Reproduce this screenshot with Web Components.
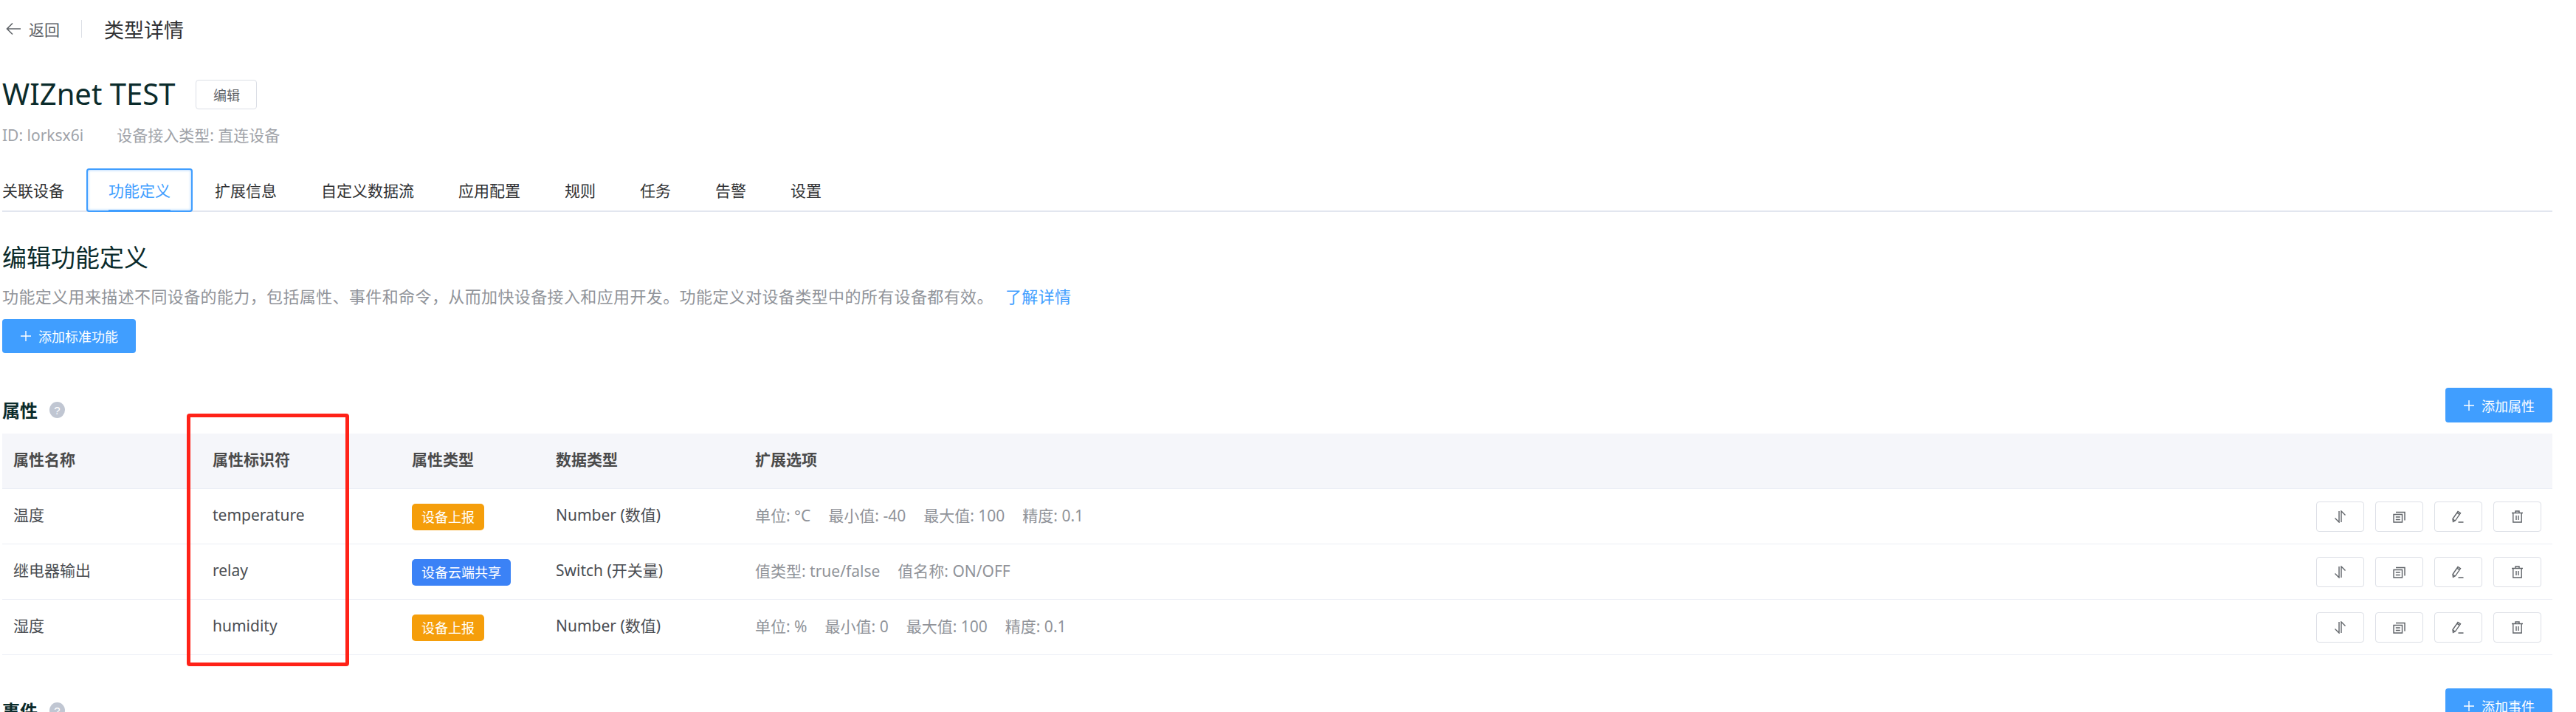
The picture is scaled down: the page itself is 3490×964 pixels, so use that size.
<!DOCTYPE html>
<html lang="zh-CN"><head><meta charset="utf-8"><title>类型详情</title>
<style>
html,body{margin:0;padding:0;height:964px;overflow:hidden;background:#fff;font-family:"Noto Sans","Noto Sans CJK SC",sans-serif;color:#303133}
</style></head><body>
<x-page>
  <x-topbar><span slot="back">返回</span>类型详情</x-topbar>
  <x-titlerow><span slot="title">WIZnet TEST</span><x-btn kind="small">编辑</x-btn></x-titlerow>
  <x-meta><span>ID: lorksx6i</span><span>设备接入类型: 直连设备</span></x-meta>
  <x-tabs>
    <x-tab>关联设备</x-tab><x-tab active>功能定义</x-tab><x-tab>扩展信息</x-tab><x-tab>自定义数据流</x-tab><x-tab>应用配置</x-tab><x-tab>规则</x-tab><x-tab>任务</x-tab><x-tab>告警</x-tab><x-tab>设置</x-tab>
  </x-tabs>
  <x-intro>
    <span slot="head">编辑功能定义</span>
    功能定义用来描述不同设备的能力&#xFF0C;包括属性、事件和命令&#xFF0C;从而加快设备接入和应用开发。功能定义对设备类型中的所有设备都有效。<span slot="link">了解详情</span>
    <x-btn slot="action" kind="primary" style="height:46px">添加标准功能</x-btn>
  </x-intro>
  <x-section-head style="margin-top:47px"><span>属性</span><x-btn slot="action" kind="primary">添加属性</x-btn></x-section-head>
  <x-table>
    <x-row head><span>属性名称</span><span>属性标识符</span><span>属性类型</span><span>数据类型</span><span>扩展选项</span></x-row>
    <x-row><span>温度</span><span>temperature</span><span><x-badge>设备上报</x-badge></span><span>Number (数值)</span><x-ext><span>单位: °C</span><span>最小值: -40</span><span>最大值: 100</span><span>精度: 0.1</span></x-ext><x-actions></x-actions></x-row>
    <x-row><span>继电器输出</span><span>relay</span><span><x-badge kind="blue">设备云端共享</x-badge></span><span>Switch (开关量)</span><x-ext><span>值类型: true/false</span><span>值名称: ON/OFF</span></x-ext><x-actions></x-actions></x-row>
    <x-row><span>湿度</span><span>humidity</span><span><x-badge>设备上报</x-badge></span><span>Number (数值)</span><x-ext><span>单位: %</span><span>最小值: 0</span><span>最大值: 100</span><span>精度: 0.1</span></x-ext><x-actions></x-actions></x-row>
  </x-table>
  <x-section-head style="margin-top:45px"><span>事件</span><x-btn slot="action" kind="primary">添加事件</x-btn></x-section-head>
  <x-highlight></x-highlight>
</x-page>
<script>
function def(name, html, init){
  customElements.define(name, class extends HTMLElement{
    constructor(){super();this.attachShadow({mode:'open'}).innerHTML=html;}
    connectedCallback(){ if(init) init.call(this); }
  });
}
def('x-page',`<style>:host{display:block;position:relative;box-sizing:border-box;width:3490px;height:964px;overflow:hidden;padding:27px 32px 0 3px}</style><slot></slot>`);
def('x-topbar',`<style>
:host{display:flex;align-items:center;height:24px;font-size:27px;color:#303133}
svg{margin-left:4px;width:22px;height:22px;flex:none}
.b{font-size:21px;color:#5a5e66;margin-left:10px;width:42px;white-space:nowrap}
i{display:block;width:1px;height:24px;background:#dcdfe6;margin:0 30px 0 29px}
</style><svg viewBox="0 0 22 22" fill="none" stroke="#5f6368" stroke-width="1.6"><path d="M21 11H3M10 3.5 2.5 11 10 18.5"/></svg><span class="b"><slot name="back"></slot></span><i></i><slot></slot>`);
def('x-titlerow',`<style>:host{display:flex;align-items:center;height:40px;margin-top:57px;gap:28px}
.t{font-size:40px;color:#0b2b2b;line-height:40px;margin-top:-2px}</style><span class="t"><slot name="title"></slot></span><slot></slot>`);
def('x-meta',`<style>:host{display:flex;gap:45px;height:28px;line-height:28px;margin-top:21px;font-size:21px;color:#a0a3a9}</style><slot></slot>`);
def('x-tabs',`<style>:host{display:flex;height:59px;margin-top:31px;box-shadow:inset 0 -2px 0 #e2e6ef}</style><slot></slot>`);
def('x-tab',`<style>:host{display:flex;position:relative;align-items:center;box-sizing:border-box;height:59px;padding:0 30px;font-size:21px;color:#303133;padding-bottom:2px;white-space:nowrap}
:host(:first-child){padding-left:0}
:host([active]){color:#409eff;border-radius:4px;box-shadow:inset 0 0 0 2px #409eff,inset 0 0 3px 3px rgba(64,158,255,.35)}
:host([active])::after{content:"";position:absolute;left:30px;right:30px;bottom:0;height:3px;background:#409eff}
</style><slot></slot>`);
def('x-intro',`<style>:host{display:block}
.h{font-size:33px;line-height:44px;margin-top:40px;color:#0b2b2b}
.d{font-size:22px;line-height:30px;margin-top:15px;margin-bottom:16px;color:#909399;letter-spacing:.38px;white-space:nowrap}
.l{color:#409eff;margin-left:10px}
.a{display:flex}
</style><div class="h"><slot name="head"></slot></div><div class="d"><slot></slot><span class="l"><slot name="link"></slot></span></div><div class="a"><slot name="action"></slot></div>`);
def('x-btn',`<style>
:host{display:inline-flex;align-items:center;box-sizing:border-box;white-space:nowrap}
:host([kind=primary]){height:47px;padding:0 24px 0 25px;background:#409eff;color:#fff;font-size:18px;font-weight:400;border-radius:4px}
:host([kind=small]){height:40px;width:83px;justify-content:center;border:1px solid #dcdfe6;border-radius:4px;color:#606266;font-size:18px}
svg{width:14px;height:14px;margin-right:10px;display:none}
:host([kind=primary]) svg{display:block}
</style><svg viewBox="0 0 14 14" stroke="#fff" stroke-width="1.4"><path d="M7 0v14M0 7h14"/></svg><slot></slot>`);
def('x-section-head',`<style>:host{display:flex;align-items:center;height:47px;font-size:24px;font-weight:700;color:#0b2b2b}
::slotted(span){margin-top:11px}
svg{width:21px;height:22px;margin-left:16px;margin-top:13px}
.s{flex:1}
</style><slot></slot><svg viewBox="0 0 21 22"><ellipse cx="10.5" cy="11" rx="10.5" ry="11" fill="#c0c6d2"/><text x="10.5" y="16.5" text-anchor="middle" font-size="15" font-family="Liberation Sans" font-weight="400" fill="#fff">?</text></svg><span class="s"></span><slot name="action"></slot>`);
def('x-table',`<style>:host{display:block;margin-top:15px}</style><slot></slot>`);
def('x-row',`<style>
:host{display:grid;grid-template-columns:270px 270px 195px 270px 1fr auto;align-items:center;box-sizing:border-box;height:75px;border-bottom:1px solid #ebeef5;font-size:21px;color:#4a4d52;white-space:nowrap}
::slotted(*){padding-left:15px}
::slotted(span){line-height:30px;margin-top:-4px}
:host([head]){background:#f5f6fa;font-weight:700;color:#4a4a4a}
</style><slot></slot>`);
def('x-badge',`<style>:host{display:inline-flex;align-items:center;box-sizing:border-box;height:36px;padding:0 13px;border-radius:5px;background:#f59e0b;color:#fff;font-size:18px;vertical-align:middle;position:relative;top:3px}
:host([kind=blue]){background:#3b82f6}</style><slot></slot>`);
def('x-ext',`<style>:host{display:flex;gap:24px;color:#909399;font-size:21px;margin-top:-4px}</style><slot></slot>`);
const icons=[
 '<path d="M7 1v15L1.5 10.5M10 16V1l5.5 5.5"/>',
 '<path d="M1 5.5h11.5V16H1zM4 2.5h12v11M3.8 9h6M3.8 12.5h6"/>',
 '<path d="M1.5 15.5 1 11.5 8 1.5l3.5 2.3-7 10zM1.3 12l3 2.2M6.8 3.2l3.5 2.4M8.5 16h7"/>',
 '<path d="M1 3.5h15M6 3.5V1h5v2.5M2.8 3.5V16h11.4V3.5M7 7v6M10 7v6"/>'
];
def('x-icon-btn',`<style>:host{display:flex;align-items:center;justify-content:center;box-sizing:border-box;width:65px;height:41px;border:1px solid #dcdfe6;border-radius:4px}
svg{width:17px;height:17px}</style><svg viewBox="0 0 17 17" fill="none" stroke="#5f6368" stroke-width="1.4"></svg>`, function(){
  this.shadowRoot.querySelector('svg').innerHTML=icons[+this.getAttribute('i')];
});
def('x-actions',`<style>:host{display:flex;gap:15px;padding-right:15px}</style><x-icon-btn i="0"></x-icon-btn><x-icon-btn i="1"></x-icon-btn><x-icon-btn i="2"></x-icon-btn><x-icon-btn i="3"></x-icon-btn>`);
def('x-highlight',`<style>:host{position:absolute;left:253px;top:560px;width:220px;height:342px;box-sizing:border-box;border:5px solid #ff2218;border-radius:4px;pointer-events:none}</style>`);
</script>
</body></html>
